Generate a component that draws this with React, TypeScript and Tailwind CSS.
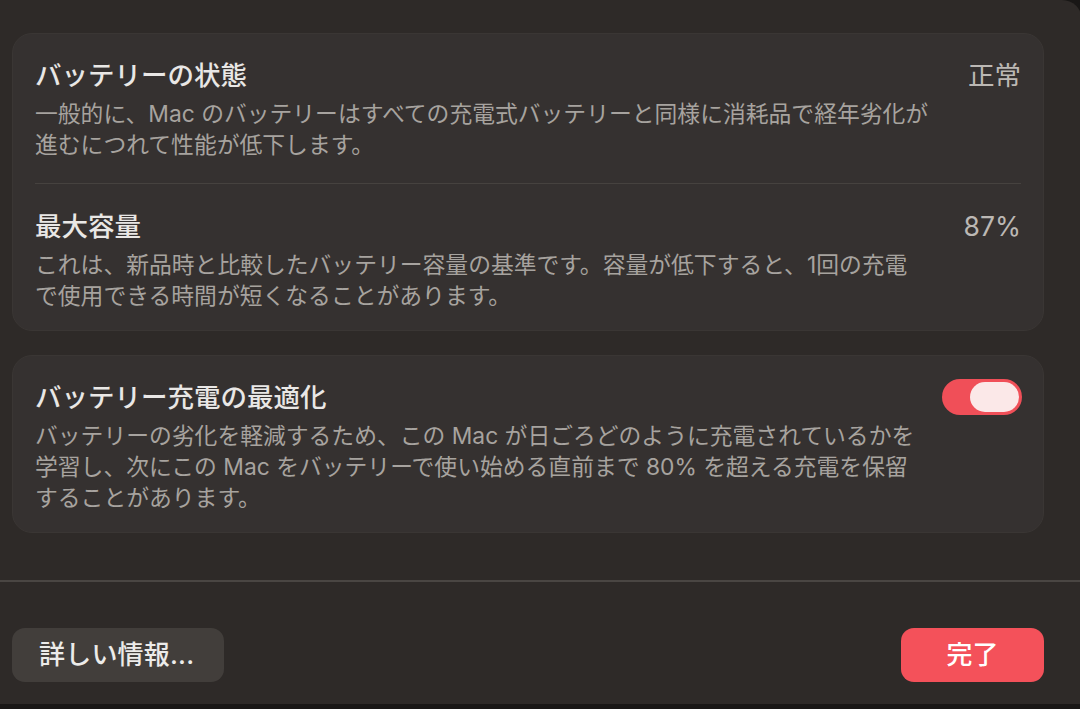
const FONT = '"Inter", "Noto Sans CJK JP", sans-serif';

interface RowProps {
  title: string;
  lines: string[];
  right?: React.ReactNode;
  className?: string;
}

function Row({ title, lines, right, className }: RowProps) {
  return (
    <div className={className}>
      <div className="flex h-[32px] items-center justify-between">
        <span className="text-[26.5px] leading-[32px] font-medium text-[#e9e7e5]">{title}</span>
        {right}
      </div>
      <div className="mt-[7px] text-[22.8px] leading-[31px] text-[#a7a39f]">
        {lines.map((line) => (
          <div key={line} className="whitespace-nowrap">
            {line}
          </div>
        ))}
      </div>
    </div>
  );
}

function Value({ text }: { text: string }) {
  return <span className="text-[26.5px] leading-[32px] text-[#bcb8b4]">{text}</span>;
}

function Toggle() {
  return (
    <div className="my-[-2px] mr-[-1px] flex h-[36px] w-[80px] shrink-0 items-center justify-end rounded-full bg-[#f04f58] pr-[3px]">
      <div className="h-[30px] w-[49px] rounded-full bg-[#fbe8e8]" />
    </div>
  );
}

export default function App() {
  return (
    <div className="h-[709px] w-[1080px] overflow-hidden bg-[#191716]" style={{ fontFamily: FONT }}>
      <div className="flex h-[704px] w-[1082px] flex-col rounded-tr-[20px] bg-[#2e2a28]">
        <div className="flex flex-col gap-[24px] pl-[12px] pr-[38px] pt-[33px]">
          <div className="rounded-[20px] border border-[#3a3634] bg-[#353130] px-[22px]">
            <Row
              className="pt-[25px] pb-[23px]"
              title="バッテリーの状態"
              right={<Value text="正常" />}
              lines={[
                "一般的に、Mac のバッテリーはすべての充電式バッテリーと同様に消耗品で経年劣化が",
                "進むにつれて性能が低下します。",
              ]}
            />
            <div className="h-px bg-[#46423f]" />
            <Row
              className="pt-[26px] pb-[19px]"
              title="最大容量"
              right={<Value text="87%" />}
              lines={[
                "これは、新品時と比較したバッテリー容量の基準です。容量が低下すると、1回の充電",
                "で使用できる時間が短くなることがあります。",
              ]}
            />
          </div>
          <div className="rounded-[20px] border border-[#3a3634] bg-[#353130] px-[22px]">
            <Row
              className="pt-[25px] pb-[19px]"
              title="バッテリー充電の最適化"
              right={<Toggle />}
              lines={[
                "バッテリーの劣化を軽減するため、この Mac が日ごろどのように充電されているかを",
                "学習し、次にこの Mac をバッテリーで使い始める直前まで 80% を超える充電を保留",
                "することがあります。",
              ]}
            />
          </div>
        </div>
        <div className="mt-[47px] h-[1.5px] bg-[#4a4643]" />
        <div className="flex items-center justify-between pl-[12px] pr-[38px] pt-[46px]">
          <button className="flex h-[54px] items-center rounded-[13px] bg-[#423e3b] pl-[27px] pr-[30px] text-[26px] font-medium tracking-[0.2px] text-[#ecebe9]">
            詳しい情報...
          </button>
          <button className="flex h-[54px] w-[143px] items-center justify-center rounded-[13px] bg-[#f4515a] text-[26px] font-medium text-white">
            完了
          </button>
        </div>
      </div>
    </div>
  );
}
